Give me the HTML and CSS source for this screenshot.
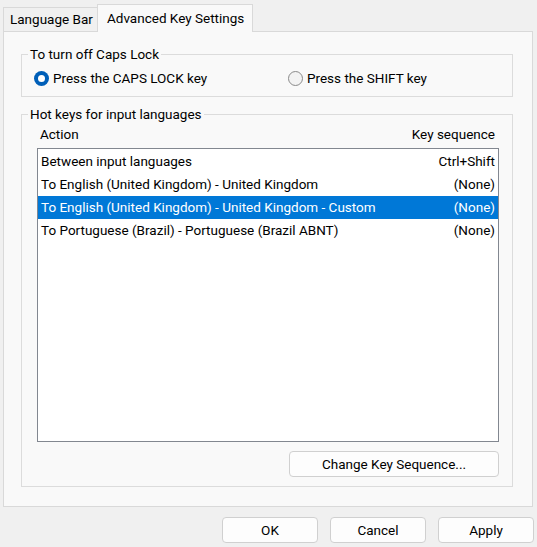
FILE: index.html
```html
<!DOCTYPE html>
<html lang="en">
<head>
    <meta charset="UTF-8">
    <title>Text Services and Input Languages</title>
    <link rel="stylesheet" href="styles.css">
</head>
<body>
    <div class="dialog">
        <div class="tabs">
            <div class="tab">Language Bar</div>
            <div class="tab active">Advanced Key Settings</div>
        </div>

        <div class="panel">
            <fieldset class="group caps">
                <legend>To turn off Caps Lock</legend>
                <div class="radios">
                    <label class="radio first"><span class="dot checked"></span>Press the CAPS LOCK key</label>
                    <label class="radio"><span class="dot"></span>Press the SHIFT key</label>
                </div>
            </fieldset>

            <fieldset class="group hotkeys">
                <legend>Hot keys for input languages</legend>
                <div class="list-head">
                    <span>Action</span>
                    <span>Key sequence</span>
                </div>
                <div class="list">
                    <div class="row"><span>Between input languages</span><span>Ctrl+Shift</span></div>
                    <div class="row"><span>To English (United Kingdom) - United Kingdom</span><span>(None)</span></div>
                    <div class="row selected"><span>To English (United Kingdom) - United Kingdom - Custom</span><span>(None)</span></div>
                    <div class="row"><span>To Portuguese (Brazil) - Portuguese (Brazil ABNT)</span><span>(None)</span></div>
                </div>
                <div class="change-row">
                    <button class="btn btn-change">Change Key Sequence...</button>
                </div>
            </fieldset>
        </div>

        <div class="footer">
            <button class="btn">OK</button>
            <button class="btn">Cancel</button>
            <button class="btn">Apply</button>
        </div>
    </div>
</body>
</html>
```

FILE: styles.css
```css
* {
    margin: 0;
    padding: 0;
    box-sizing: border-box;
}

body {
    background-color: #f0f0f0;
    color: #000;
    font-family: Roboto, 'Noto Sans', sans-serif;
    font-size: 13.5px;
    width: 537px;
    height: 547px;
    overflow: hidden;
}

/* abas */
.tabs {
    display: flex;
    align-items: flex-end;
    height: 31px;
    padding-left: 3px;
}

.tab {
    height: 24px;
    line-height: 22px;
    padding: 0 6px 0 6px;
    border: 1px solid #d9d9d9;
    border-bottom: none;
    background: #f0f0f0;
    width: 96px;
    white-space: nowrap;
}

.tab.active {
    height: 28px;
    line-height: 26px;
    width: 156px;
    margin-left: -2px;
    margin-bottom: -1px;
    padding: 0 8px 0 9px;
    background: #f9f9f9;
    position: relative;
    border-left: 1px solid #d9d9d9;
}

.panel {
    margin: 0 4px 0 3px;
    height: 476px;
    border: 1px solid #d9d9d9;
    background: #f9f9f9;
    padding: 14px 19px 0 17px;
}

/* grupos */
.group {
    border: 1px solid #dcdcdc;
    padding: 0 6px;
}

.group legend {
    line-height: 16px;
    padding: 0 2px;
    margin-left: 0;
}

.caps {
    padding-top: 6px;
    padding-bottom: 8px;
}

.radios {
    display: flex;
    height: 20px;
    align-items: center;
    padding-left: 6px;
}

.radio {
    display: flex;
    align-items: center;
    gap: 4px;
}

.radio.first {
    width: 254px;
}

.dot {
    width: 15px;
    height: 15px;
    border-radius: 50%;
    border: 1px solid #8a8a8a;
    background: #f3f3f3;
    flex: none;
}

.dot.checked {
    border: none;
    background: #005fb8;
    display: flex;
    align-items: center;
    justify-content: center;
}

.dot.checked::after {
    content: '';
    width: 7px;
    height: 7px;
    border-radius: 50%;
    background: #fff;
}

.hotkeys {
    margin-top: 9px;
    padding-bottom: 9px;
}

.list-head {
    display: flex;
    justify-content: space-between;
    height: 20px;
    line-height: 20px;
    margin: 2px 11px 4px 12px;
}

.list {
    width: 462px;
    height: 294px;
    margin-left: 9px;
    border: 1px solid #828790;
    background: #fff;
    padding-top: 1px;
}

.row {
    display: flex;
    justify-content: space-between;
    height: 23px;
    line-height: 23px;
    padding: 0 3px 0 3px;
}

.row.selected {
    background: #0078d7;
    color: #fff;
}

.change-row {
    display: flex;
    justify-content: flex-end;
    margin-top: 9px;
    padding-right: 7px;
}

/* botões */
.btn {
    width: 96px;
    height: 26px;
    border: 1px solid #d0d0d0;
    border-radius: 4px;
    background: #fdfdfd;
    font-family: inherit;
    font-size: 13.5px;
    color: #000;
}

.btn-change {
    width: 210px;
}

.footer {
    display: flex;
    justify-content: flex-end;
    gap: 12px;
    margin-top: 10px;
    padding-right: 3px;
}
```
